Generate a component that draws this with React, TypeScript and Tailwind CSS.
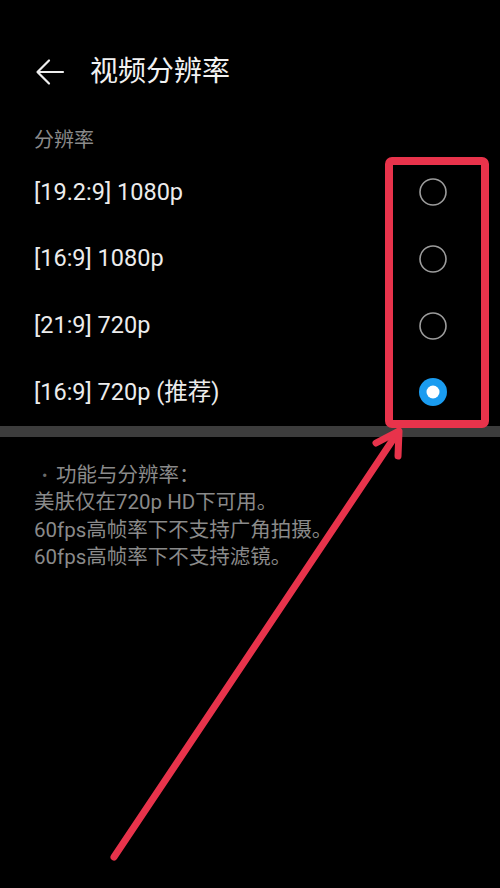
import React from "react";

const rows = [
  { label: "[19.2:9] 1080p", selected: false },
  { label: "[16:9] 1080p", selected: false },
  { label: "[21:9] 720p", selected: false },
  { label: "[16:9] 720p (推荐)", selected: true },
];

function Radio({ selected }: { selected: boolean }) {
  return selected ? (
    <svg width="30" height="30" viewBox="0 0 30 30">
      <circle cx="15" cy="15" r="14" fill="#1a9cf0" />
      <circle cx="15" cy="15" r="6.5" fill="#ffffff" />
    </svg>
  ) : (
    <svg width="30" height="30" viewBox="0 0 30 30">
      <circle cx="15" cy="15" r="13" fill="none" stroke="#9c9c9c" strokeWidth="1.6" />
    </svg>
  );
}

export default function App() {
  return (
    <div className="relative w-[500px] h-[888px] bg-black overflow-hidden font-['Roboto','Noto_Sans_CJK_SC',sans-serif]">
      <div className="pt-[54px]">
        <div className="h-[36px] flex items-center pl-[35px]">
          <svg width="30" height="30" viewBox="0 0 30 30" className="shrink-0">
            <path d="M28 15 H3 M14 3.5 L2.5 15 L14 26.5" fill="none" stroke="#ededed" strokeWidth="2.2" strokeLinecap="round" strokeLinejoin="round" />
          </svg>
          <span className="ml-[25px] text-[28px] leading-none text-[#f2f2f2]">视频分辨率</span>
        </div>
        <div className="mt-[38px] h-[24px] flex items-center pl-[34px] text-[20px] text-[#8a8a8a]">分辨率</div>
        <div className="mt-[7px]">
          {rows.map((r) => (
            <div key={r.label} className="h-[66.67px] flex items-center justify-between pl-[34px] pr-[52px]">
              <span className="text-[23.5px] text-[#ececec]">{r.label}</span>
              <Radio selected={r.selected} />
            </div>
          ))}
        </div>
        <div className="h-[11px] bg-[#3c3c3c]" />
        <div className="pt-[25px] pl-[34px] text-[20.5px] leading-[27.5px] text-[#8a8a8a]">
          <div className="flex items-center">
            <span className="ml-[8px] w-[14px] text-[16px] text-[#6a6a6a]">•</span>
            <span>功能与分辨率：</span>
          </div>
          <div>美肤仅在720p HD下可用。</div>
          <div>60fps高帧率下不支持广角拍摄。</div>
          <div>60fps高帧率下不支持滤镜。</div>
        </div>
      </div>
      <svg className="absolute left-0 top-0 pointer-events-none" width="500" height="888" viewBox="0 0 500 888">
        <rect x="389" y="161" width="96" height="263" rx="3" fill="none" stroke="#e8334b" strokeWidth="8" />
        <path d="M114 857 L398 432" fill="none" stroke="#e8334b" strokeWidth="7" strokeLinecap="round" />
        <path d="M376 443 L399 431 L398 456" fill="none" stroke="#e8334b" strokeWidth="7" strokeLinecap="round" strokeLinejoin="round" />
      </svg>
    </div>
  );
}
